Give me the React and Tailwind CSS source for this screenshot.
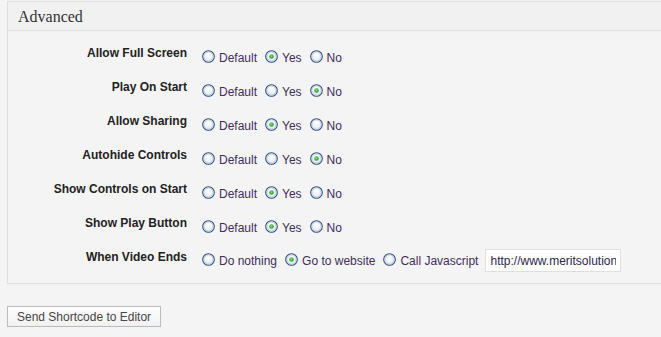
import React from 'react';

const rows = [
  { label: 'Allow Full Screen', value: 'Yes' },
  { label: 'Play On Start', value: 'No' },
  { label: 'Allow Sharing', value: 'Yes' },
  { label: 'Autohide Controls', value: 'No' },
  { label: 'Show Controls on Start', value: 'Yes' },
  { label: 'Show Play Button', value: 'Yes' },
];

function Radio({ checked }) {
  return (
    <svg width="13" height="13" viewBox="0 0 13 13" className="shrink-0">
      <defs>
        <radialGradient id="rfill" cx="50%" cy="40%" r="60%">
          <stop offset="0%" stopColor="#ffffff" />
          <stop offset="100%" stopColor="#dde3ea" />
        </radialGradient>
        <radialGradient id="rdot" cx="45%" cy="40%" r="60%">
          <stop offset="0%" stopColor="#7fe07f" />
          <stop offset="100%" stopColor="#1f9a1f" />
        </radialGradient>
      </defs>
      <circle cx="6.5" cy="6.5" r="5.8" fill="url(#rfill)" stroke="#2e4f7a" strokeWidth="1.1" />
      <circle cx="6.5" cy="6.5" r="4.6" fill="none" stroke="#b9c9dc" strokeWidth="0.8" />
      {checked && <circle cx="6.5" cy="6.5" r="2.3" fill="url(#rdot)" />}
    </svg>
  );
}

function Option({ text, checked }) {
  return (
    <label className="flex items-start">
      <Radio checked={checked} />
      <span className="ml-[4px] leading-4 text-[#3f2d5a]">{text}</span>
    </label>
  );
}

export default function App() {
  return (
    <div
      className="min-h-screen bg-[#f4f4f4] overflow-hidden text-[12px]"
      style={{ fontFamily: '"Liberation Sans", Arial, sans-serif' }}
    >
      <div className="pt-[1px]">
        <div className="ml-[7px] border border-r-0 border-[#dfdfdf] bg-[#f4f4f4]">
          <div className="h-[29px] bg-[#f1f1f1] border-b border-[#dfdfdf] pl-[10px] pt-[5px]">
            <span
              className="text-[16px] leading-5 text-[#333]"
              style={{ fontFamily: '"Liberation Serif", Georgia, serif' }}
            >
              Advanced
            </span>
          </div>
          <div className="pt-[5px] pb-[9px]">
            {rows.map((r) => (
              <div key={r.label} className="flex items-start h-[34px] pt-[9px]">
                <div className="w-[179px] text-right font-bold leading-4 text-[#222]">{r.label}</div>
                <div className="ml-[15px] mt-[5px] flex gap-[8px]">
                  {['Default', 'Yes', 'No'].map((o) => (
                    <Option key={o} text={o} checked={o === r.value} />
                  ))}
                </div>
              </div>
            ))}
            <div className="flex items-start h-[34px] pt-[9px]">
              <div className="w-[179px] text-right font-bold leading-4 text-[#222]">When Video Ends</div>
              <div className="ml-[15px] flex items-center h-[23px] gap-[8px]">
                <Option text="Do nothing" />
                <Option text="Go to website" checked />
                <Option text="Call Javascript" />
                <input
                  type="text"
                  defaultValue="http://www.meritsolutions.com"
                  className="-ml-[1px] w-[136px] h-[23px] bg-white border border-[#dfdfdf] px-[4px] text-[12px] text-[#2d1f4a] outline-none"
                  style={{ fontFamily: '"Liberation Sans", Arial, sans-serif' }}
                />
              </div>
            </div>
          </div>
        </div>
      </div>
      <div className="mt-[22px] ml-[7px]">
        <button className="h-[21px] px-[9px] border border-[#bbb] bg-gradient-to-b from-[#ffffff] to-[#f0f0f0] text-[12px] text-[#464646] leading-4">
          Send Shortcode to Editor
        </button>
      </div>
    </div>
  );
}
